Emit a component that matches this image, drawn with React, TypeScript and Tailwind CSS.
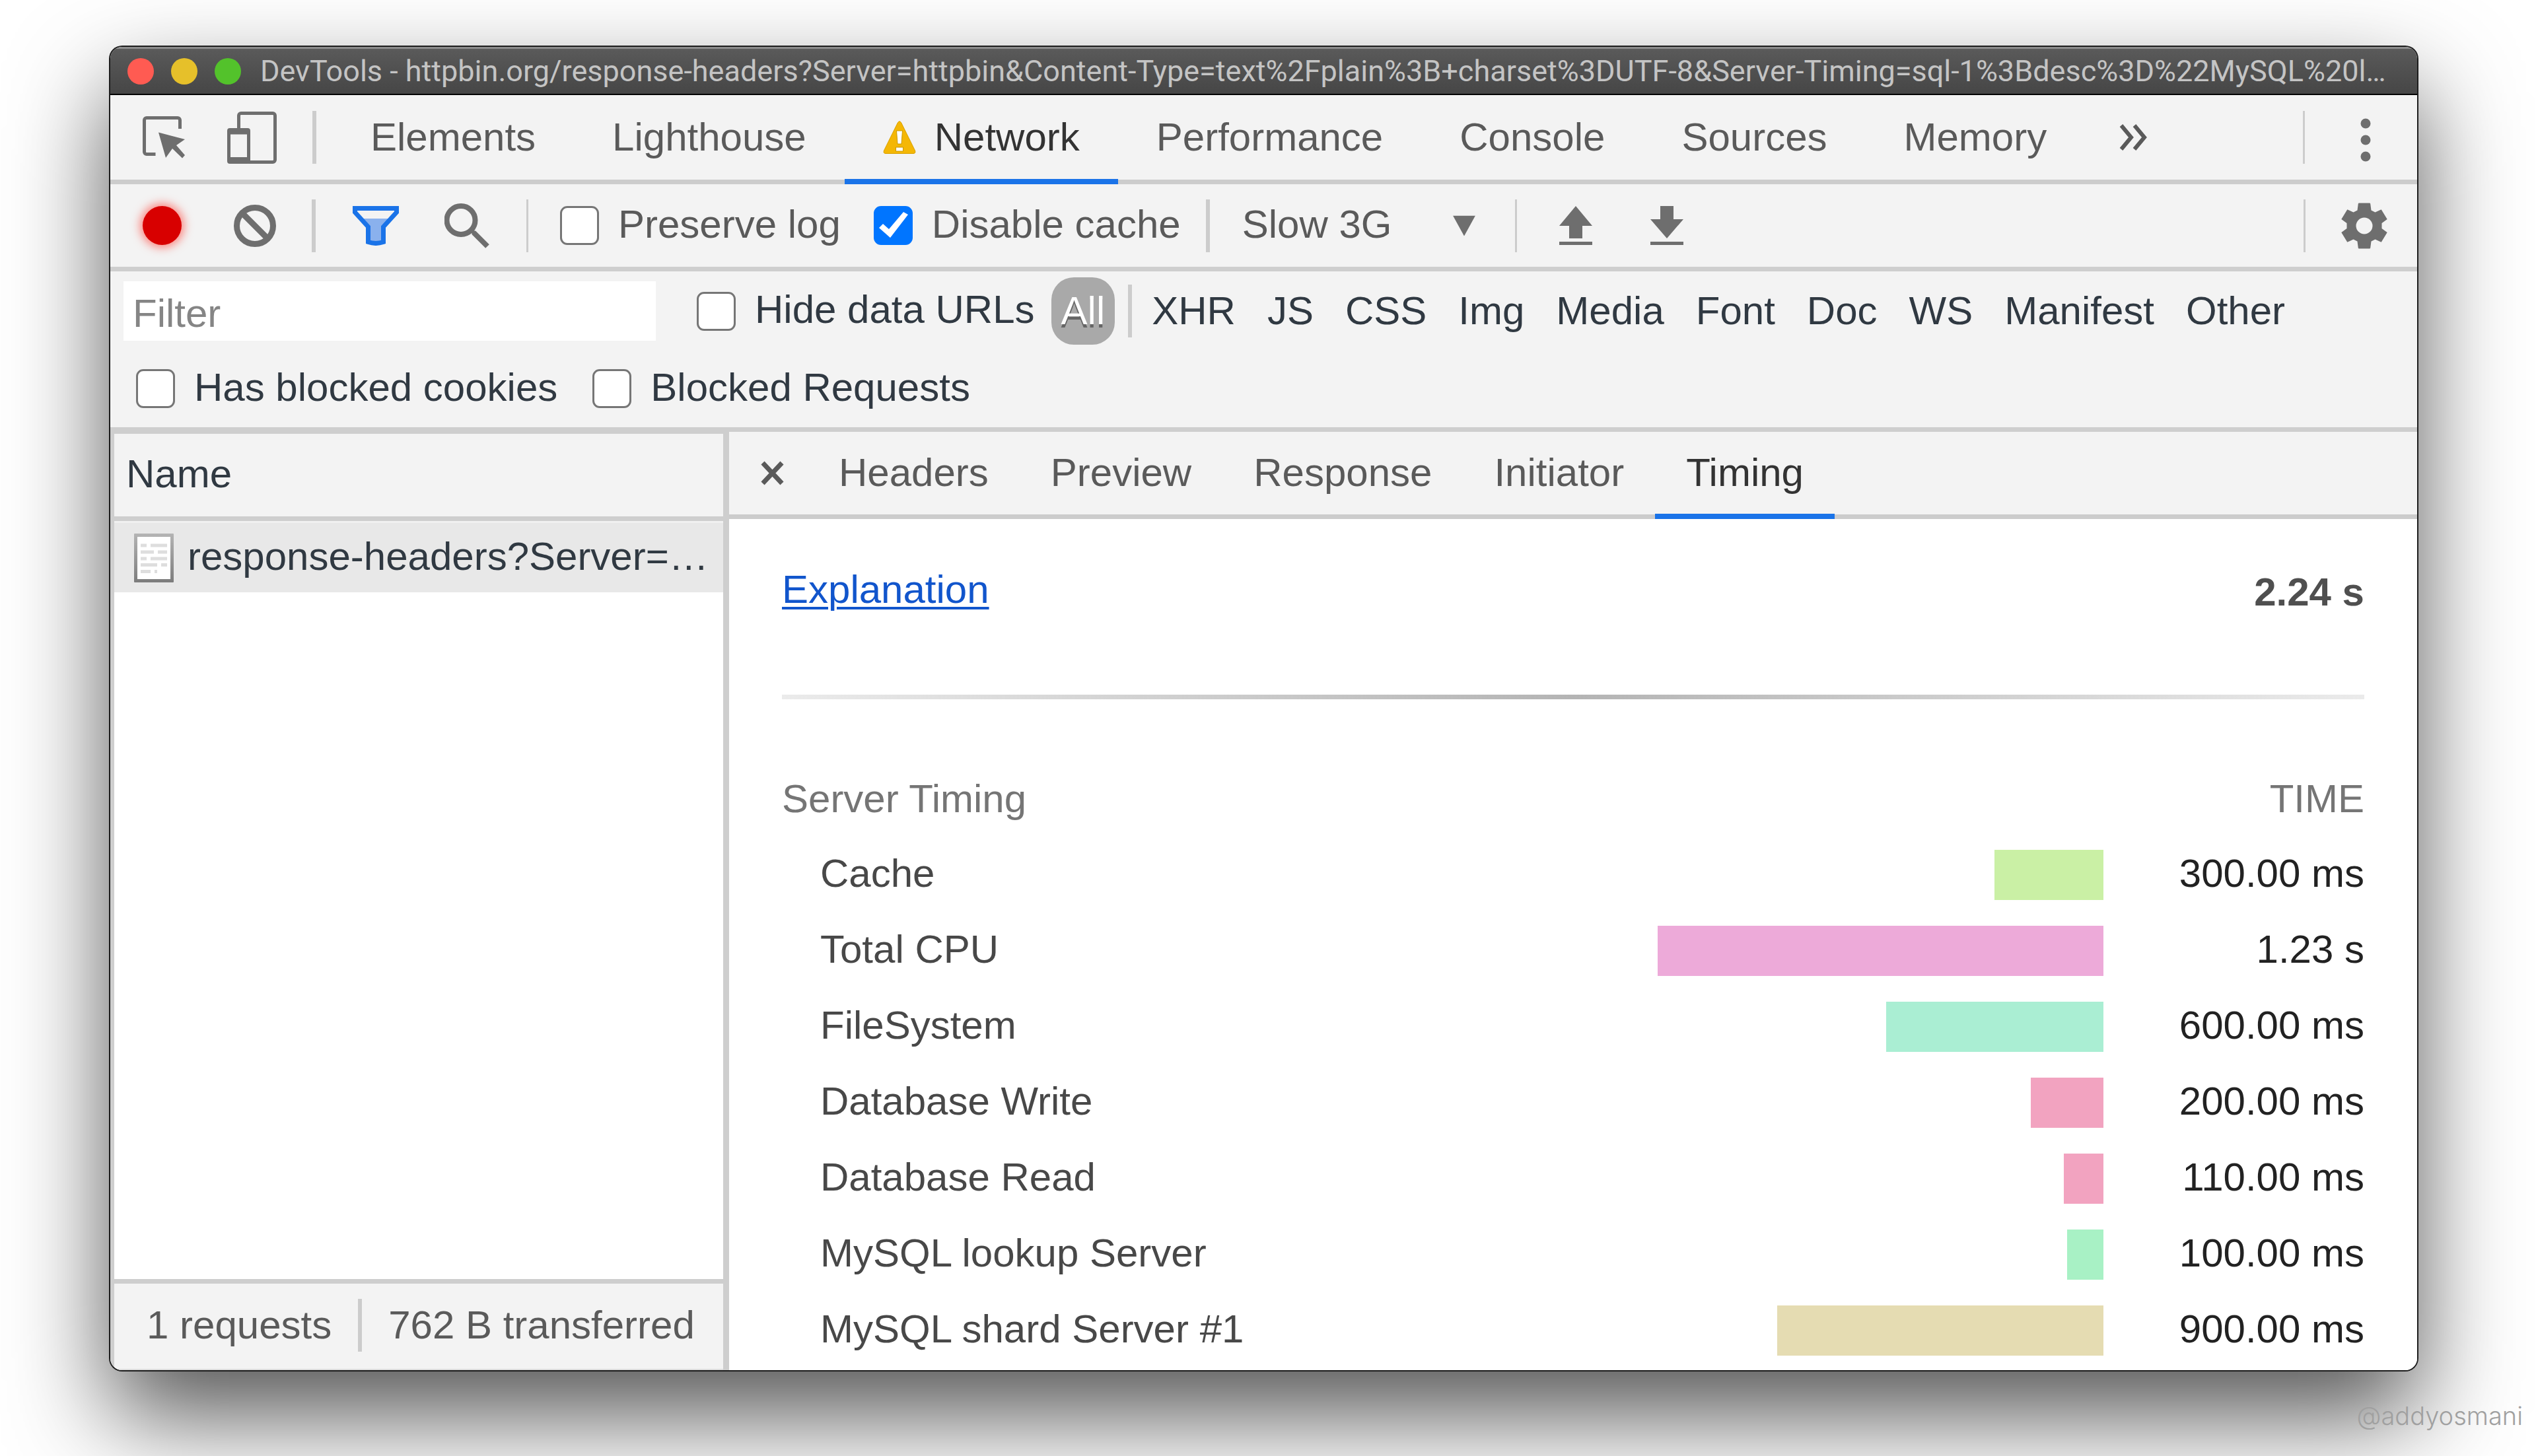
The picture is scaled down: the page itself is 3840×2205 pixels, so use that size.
import { useState } from 'react';

interface ServerTiming {
  name: string;
  duration: number;
  label: string;
  color: string;
}

interface CheckboxProps {
  id: string;
  label: string;
  checked?: boolean;
}

const TOTAL_DURATION = 2240;

const mainTabs = ['Elements', 'Lighthouse', 'Network', 'Performance', 'Console', 'Sources', 'Memory'];
const detailTabs = ['Headers', 'Preview', 'Response', 'Initiator', 'Timing'];
const resourceTypes = ['XHR', 'JS', 'CSS', 'Img', 'Media', 'Font', 'Doc', 'WS', 'Manifest', 'Other'];

const timings: ServerTiming[] = [
  { name: 'Cache', duration: 300, label: '300.00 ms', color: 'bg-[#caf0a5]' },
  { name: 'Total CPU', duration: 1230, label: '1.23 s', color: 'bg-[#edaad9]' },
  { name: 'FileSystem', duration: 600, label: '600.00 ms', color: 'bg-[#aaeed3]' },
  { name: 'Database Write', duration: 200, label: '200.00 ms', color: 'bg-[#f2a3c0]' },
  { name: 'Database Read', duration: 110, label: '110.00 ms', color: 'bg-[#f2a3c0]' },
  { name: 'MySQL lookup Server', duration: 100, label: '100.00 ms', color: 'bg-[#a8f1c5]' },
  { name: 'MySQL shard Server #1', duration: 900, label: '900.00 ms', color: 'bg-[#e5dcb2]' },
];

function InspectIcon() {
  return (
    <svg width="64" height="64" viewBox="0 0 64 64" fill="none">
      <path d="M56.5 19V6A3.5 3.5 0 0 0 53 2.5H6A3.5 3.5 0 0 0 2.5 6v48A3.5 3.5 0 0 0 6 57.5h13.5" stroke="#6e6e6e" strokeWidth="5" />
      <path d="M24 24.5 64 35 51 44 64 59 60 63.5 45 49 35 63Z" fill="#6e6e6e" />
    </svg>
  );
}

function DeviceIcon() {
  return (
    <svg width="75" height="79" viewBox="0 0 75 79" fill="none">
      <path d="M17.5 27V6A3.5 3.5 0 0 1 21 2.5h48A3.5 3.5 0 0 1 72.5 6v67a3.5 3.5 0 0 1-3.5 3.5H32" stroke="#6e6e6e" strokeWidth="5" />
      <path fillRule="evenodd" d="M4 25h27a4 4 0 0 1 4 4v46a4 4 0 0 1-4 4H4a4 4 0 0 1-4-4V29a4 4 0 0 1 4-4ZM5 34.5v34.5h25V34.5Z" fill="#6e6e6e" />
    </svg>
  );
}

function WarningIcon() {
  return (
    <svg width="50" height="50" viewBox="0 0 50 50">
      <path d="M22.5 2.5Q25 -1 27.5 2.5L48.5 45Q50 49.5 46 49.5H4Q0 49.5 1.5 45Z" fill="#f4b705" stroke="#d8a000" strokeWidth="1" />
      <path d="M20.5 15h9l-1.5 20h-6ZM19.5 40h11v6h-11Z" fill="#fff" stroke="#c99700" strokeWidth="1" />
    </svg>
  );
}

function ClearIcon() {
  return (
    <svg width="64" height="64" viewBox="0 0 64 64" fill="none" stroke="#6e6e6e" strokeWidth="9">
      <circle cx="32" cy="32" r="27.5" />
      <path d="M13 13 51 51" />
    </svg>
  );
}

function FilterIcon() {
  return (
    <svg width="70" height="60" viewBox="0 0 70 60">
      <path d="M14 19h42L47 32v22q-12 5-24 0V32Z" fill="#8ab1ed" />
      <path d="M3.5 3.5h63v6L46.5 31.5v23q-11.5 4-23 0v-23L3.5 9.5Z" fill="none" stroke="#1a73e8" strokeWidth="7" />
    </svg>
  );
}

function SearchIcon() {
  return (
    <svg width="68" height="68" viewBox="0 0 68 68" fill="none" stroke="#6e6e6e">
      <circle cx="25" cy="25.5" r="21.5" strokeWidth="8" />
      <path d="M40 40 46 46" strokeWidth="6" />
      <path d="M44 44 65 65" strokeWidth="8" />
    </svg>
  );
}

function UploadIcon() {
  return (
    <svg width="50" height="59" viewBox="0 0 50 59" fill="#6e6e6e">
      <path d="M25 0 50 30H35V49H15V30H0ZM0 54h50v5H0Z" />
    </svg>
  );
}

function DownloadIcon() {
  return (
    <svg width="50" height="59" viewBox="0 0 50 59" fill="#6e6e6e">
      <path d="M15 0H35V20H50L25 49 0 20H15ZM0 54h50v5H0Z" />
    </svg>
  );
}

function GearIcon() {
  return (
    <svg width="70" height="70" viewBox="-35 -35 70 70" fill="#6e6e6e">
      <path
        fillRule="evenodd"
        d="M-8 -34.5H8Q9 -34.5 9.2 -33.5L10.5 -23.5 16.5 -20.5 25.7 -24.7 34.7 -10 26.5 -4V4L34.7 10 25.7 24.7 16.5 20.5 10.5 23.5 9.2 33.5Q9 34.5 8 34.5H-8Q-9 34.5 -9.2 33.5L-10.5 23.5 -16.5 20.5 -25.7 24.7 -34.7 10 -26.5 4V-4L-34.7 -10 -25.7 -24.7 -16.5 -20.5 -10.5 -23.5 -9.2 -33.5Q-9 -34.5 -8 -34.5ZM0 -12.5a12.5 12.5 0 1 0 0 25a12.5 12.5 0 1 0 0 -25Z"
      />
    </svg>
  );
}

function DocumentIcon() {
  return (
    <svg width="60" height="74" viewBox="0 0 60 74">
      <defs>
        <linearGradient id="doc-frame" x1="0" y1="0" x2="0" y2="1">
          <stop offset="0" stopColor="#b4b4b4" />
          <stop offset="1" stopColor="#7c7c7c" />
        </linearGradient>
      </defs>
      <rect width="60" height="74" rx="1" fill="url(#doc-frame)" />
      <rect x="5" y="5" width="50" height="64" fill="#fff" />
      <path
        d="M10 18h9M25 18h25M10 28h20M36 28h14M10 38h9M25 38h25M10 47.5h25M41 47.5h9M10 57.5h15M31 57.5h4"
        stroke="#dedede"
        strokeWidth="5"
      />
    </svg>
  );
}

function Separator() {
  return <div className="h-20 w-[6px] shrink-0 bg-[#cccccc]" />;
}

function ThinSeparator() {
  return <div className="h-20 w-[3px] shrink-0 bg-[#cccccc]" />;
}

function Checkbox({ id, label, checked = false }: CheckboxProps) {
  return (
    <div className="flex shrink-0 items-center gap-[29px]">
      <span className="relative block h-[59px] w-[59px]">
        <input
          id={id}
          type="checkbox"
          defaultChecked={checked}
          className="peer block h-[59px] w-[59px] appearance-none rounded-[11px] border-3 border-[#767676] bg-white checked:border-[#0075ff] checked:bg-[#0075ff]"
        />
        <svg
          viewBox="0 0 59 59"
          className="pointer-events-none absolute inset-0 hidden peer-checked:block"
        >
          <path d="M8 33 14 27 23 35 45 9 52 13 25 48Z" fill="#fff" />
        </svg>
      </span>
      <label htmlFor={id} className="pb-1 whitespace-nowrap">{label}</label>
    </div>
  );
}

function TitleBar() {
  return (
    <header className="flex h-[73px] items-center border-t-3 border-b-2 border-t-[#8c8c8c] border-b-black bg-linear-to-b from-[#5a5a5a] to-[#464646] pr-4 pl-[26px]">
      <div className="flex gap-[26px]">
        <button aria-label="Close window" className="h-10 w-10 rounded-full bg-[#ff5b52]" />
        <button aria-label="Minimize window" className="h-10 w-10 rounded-full bg-[#e6c02a]" />
        <button aria-label="Zoom window" className="h-10 w-10 rounded-full bg-[#53c22b]" />
      </div>
      <h1 className="ml-[29px] min-w-0 truncate font-[Roboto,sans-serif] text-[45px] leading-[56px] text-[#c4c4c4]">
        DevTools - httpbin.org/response-headers?Server=httpbin&amp;Content-Type=text%2Fplain%3B+charset%3DUTF-8&amp;Server-Timing=sql-1%3Bdesc%3D%22MySQL%20l…
      </h1>
    </header>
  );
}

function MainTabs() {
  const [active, setActive] = useState('Network');

  return (
    <nav className="flex h-[135px] items-center border-b-[7px] border-[#cccccc] pl-[49px] text-[#5a5a5a]">
      <button aria-label="Inspect element"><InspectIcon /></button>
      <button aria-label="Toggle device toolbar" className="mr-[54px] ml-16"><DeviceIcon /></button>
      <Separator />
      <div className="-mb-[7px] ml-6 flex self-stretch">
        {mainTabs.map((tab) => (
          <button
            key={tab}
            onClick={() => setActive(tab)}
            className={`flex items-center gap-7 border-b-8 px-[58px] ${tab === active
              ? 'border-[#1a73e8] text-[#333333]'
              : 'border-transparent'}`}
          >
            {tab === 'Network' && <WarningIcon />}
            {tab}
          </button>
        ))}
      </div>
      <button aria-label="More tabs" className="ml-[52px]">
        <svg width="43" height="40" viewBox="0 0 43 40" fill="none" stroke="#5a5a5a" strokeWidth="6">
          <path d="M3 2 18 20 3 38M23 2 38 20 23 38" />
        </svg>
      </button>
      <div className="mr-[70px] ml-auto flex items-center gap-[84px]">
        <ThinSeparator />
        <button aria-label="Customize DevTools">
          <svg width="16" height="76" viewBox="0 0 16 76" fill="#6e6e6e">
            <circle cx="8" cy="17" r="7.5" />
            <circle cx="8" cy="42" r="7.5" />
            <circle cx="8" cy="67" r="7.5" />
          </svg>
        </button>
      </div>
    </nav>
  );
}

function NetworkToolbar() {
  return (
    <div className="flex h-[132px] items-center border-b-[7px] border-[#cecece] pl-[49px] text-[#5a5a5a]">
      <button
        aria-label="Stop recording"
        className="h-[59px] w-[59px] rounded-full bg-[#d80000] shadow-[0_0_14px_4px_rgba(255,60,50,0.6)]"
      />
      <button aria-label="Clear" className="mr-[54px] ml-[79px]"><ClearIcon /></button>
      <Separator />
      <button aria-label="Filter" className="ml-14"><FilterIcon /></button>
      <button aria-label="Search" className="mr-14 ml-[69px]"><SearchIcon /></button>
      <ThinSeparator />
      <div className="mr-[38px] ml-12 flex gap-[50px]">
        <Checkbox id="preserve-log" label="Preserve log" />
        <Checkbox id="disable-cache" label="Disable cache" checked />
      </div>
      <Separator />
      <div className="relative mr-[60px] ml-[49px]">
        <select
          aria-label="Throttling"
          className="block w-[353px] appearance-none bg-transparent pb-1 text-[#5a5a5a]"
        >
          <option>Slow 3G</option>
        </select>
        <svg
          width="34"
          height="31"
          viewBox="0 0 34 31"
          className="pointer-events-none absolute top-1/2 right-0 -translate-y-1/2"
        >
          <path d="M0 0H34L17 31Z" fill="#6e6e6e" />
        </svg>
      </div>
      <ThinSeparator />
      <button aria-label="Import HAR file" className="ml-16"><UploadIcon /></button>
      <button aria-label="Export HAR file" className="ml-[88px]"><DownloadIcon /></button>
      <div className="mr-[45px] ml-auto flex items-center gap-[54px]">
        <ThinSeparator />
        <button aria-label="Network settings"><GearIcon /></button>
      </div>
    </div>
  );
}

function FilterBar() {
  return (
    <div className="h-[243px] border-b-[7px] border-[#cecece] pl-5 text-[#303942]">
      <div className="flex h-30 items-center">
        <input
          type="text"
          aria-label="Filter"
          placeholder="Filter"
          className="h-[90px] w-[806px] bg-white px-[14px] pt-[6px] placeholder:text-[#858585]"
        />
        <div className="ml-[62px]">
          <Checkbox id="hide-data-urls" label="Hide data URLs" />
        </div>
        <button className="ml-[25px] h-[102px] rounded-[34px] bg-[#a9a9a9] px-[15px] text-white [text-shadow:0_5px_0_rgba(0,0,0,0.4)]">
          All
        </button>
        <div className="mr-[30px] ml-5"><Separator /></div>
        <div className="flex gap-12 [text-shadow:0_5px_0_#ffffff]">
          {resourceTypes.map((type) => (
            <button key={type}>{type}</button>
          ))}
        </div>
      </div>
      <div className="flex h-[115px] items-center gap-[53px] pl-[19px]">
        <Checkbox id="blocked-cookies" label="Has blocked cookies" />
        <Checkbox id="blocked-requests" label="Blocked Requests" />
      </div>
    </div>
  );
}

function RequestList() {
  return (
    <aside className="flex w-[937px] shrink-0 flex-col border-r-[9px] border-l-[6px] border-[#cecece] text-[#303942]">
      <div className="flex h-[135px] items-center border-t-3 border-b-[7px] border-[#cecece] pb-1 pl-[18px]">Name</div>
      <div className="border-t-3 border-[#f0f0f0]">
        <button className="flex h-[105px] w-full items-center gap-[21px] bg-[#e8e8e8] pl-[30px]">
          <DocumentIcon />
          <span className="truncate pb-1">response-headers?Server=…</span>
        </button>
      </div>
      <div className="flex-1 bg-white" />
      <footer className="flex h-[138px] items-center border-t-[7px] border-b-2 border-t-[#cecece] border-b-[#dcdcdc] bg-[#f3f3f3] pb-1 pl-[49px] whitespace-nowrap text-[#5a5a5a]">
        <span>1 requests</span>
        <div className="mx-10"><Separator /></div>
        <span>762 B transferred</span>
      </footer>
    </aside>
  );
}

function TimingTable() {
  return (
    <table className="w-full table-fixed">
      <colgroup>
        <col />
        <col className="w-[51.3%]" />
        <col className="w-[395px]" />
      </colgroup>
      <thead>
        <tr className="h-[110px] text-[#757575]">
          <th className="text-left font-normal">Server Timing</th>
          <th />
          <th className="text-right font-normal">TIME</th>
        </tr>
      </thead>
      <tbody>
        {timings.map((timing) => (
          <tr key={timing.name} className="h-[115px]">
            <td className="pl-[58px] whitespace-nowrap text-[#484848]">{timing.name}</td>
            <td className="pt-1">
              <div
                className={`ml-auto h-[76px] ${timing.color}`}
                style={{ width: `${(timing.duration / TOTAL_DURATION) * 100}%` }}
              />
            </td>
            <td className="text-right whitespace-nowrap text-[#222222]">{timing.label}</td>
          </tr>
        ))}
      </tbody>
    </table>
  );
}

function RequestDetails() {
  const [active, setActive] = useState('Timing');

  return (
    <main className="flex min-w-0 flex-1 flex-col bg-white">
      <nav className="flex h-[132px] items-center border-b-[7px] border-[#cccccc] bg-[#f3f3f3] pl-12 text-[#5a5a5a]">
        <button aria-label="Close details">
          <svg width="35" height="37" viewBox="0 0 35 37" fill="none" stroke="#5a5a5a" strokeWidth="7">
            <path d="M3 3 32 34M32 3 3 34" />
          </svg>
        </button>
        <div className="-mb-[7px] ml-9 flex self-stretch">
          {detailTabs.map((tab) => (
            <button
              key={tab}
              onClick={() => setActive(tab)}
              className={`border-b-8 px-[47px] ${tab === active
                ? 'border-[#1a73e8] text-[#333333]'
                : 'border-transparent'}`}
            >
              {tab}
            </button>
          ))}
        </div>
      </nav>
      <div className="px-20">
        <div className="flex h-[266px] items-start justify-between pt-[72px]">
          <a href="#explanation" className="text-[#1155cc] underline decoration-4 underline-offset-6">Explanation</a>
          <strong className="pt-1 text-[#4f4f4f]">2.24 s</strong>
        </div>
        <div className="mb-24 h-[7px] bg-linear-to-r from-[#ebebeb] via-[#b4b4b4] to-[#ebebeb]" />
        <TimingTable />
      </div>
    </main>
  );
}

export default function App() {
  return (
    <div className="relative flex min-h-screen overflow-hidden bg-white pt-[71px] pr-[180px] pb-[130px] pl-[167px] font-['Liberation_Sans',Arial,sans-serif] text-[60px] leading-[70px]">
      <div className="flex min-w-0 flex-1 flex-col overflow-hidden rounded-[18px] bg-[#f3f3f3] shadow-[0_0_0_2px_#1c1c1c,0_68px_150px_rgba(0,0,0,0.68)]">
        <TitleBar />
        <MainTabs />
        <NetworkToolbar />
        <FilterBar />
        <div className="flex flex-1">
          <RequestList />
          <RequestDetails />
        </div>
      </div>
      <p className="absolute right-5 bottom-9 font-[Inter,sans-serif] text-[38px] leading-[50px] font-light text-[#a0a0a0]">
        @addyosmani
      </p>
    </div>
  );
}
